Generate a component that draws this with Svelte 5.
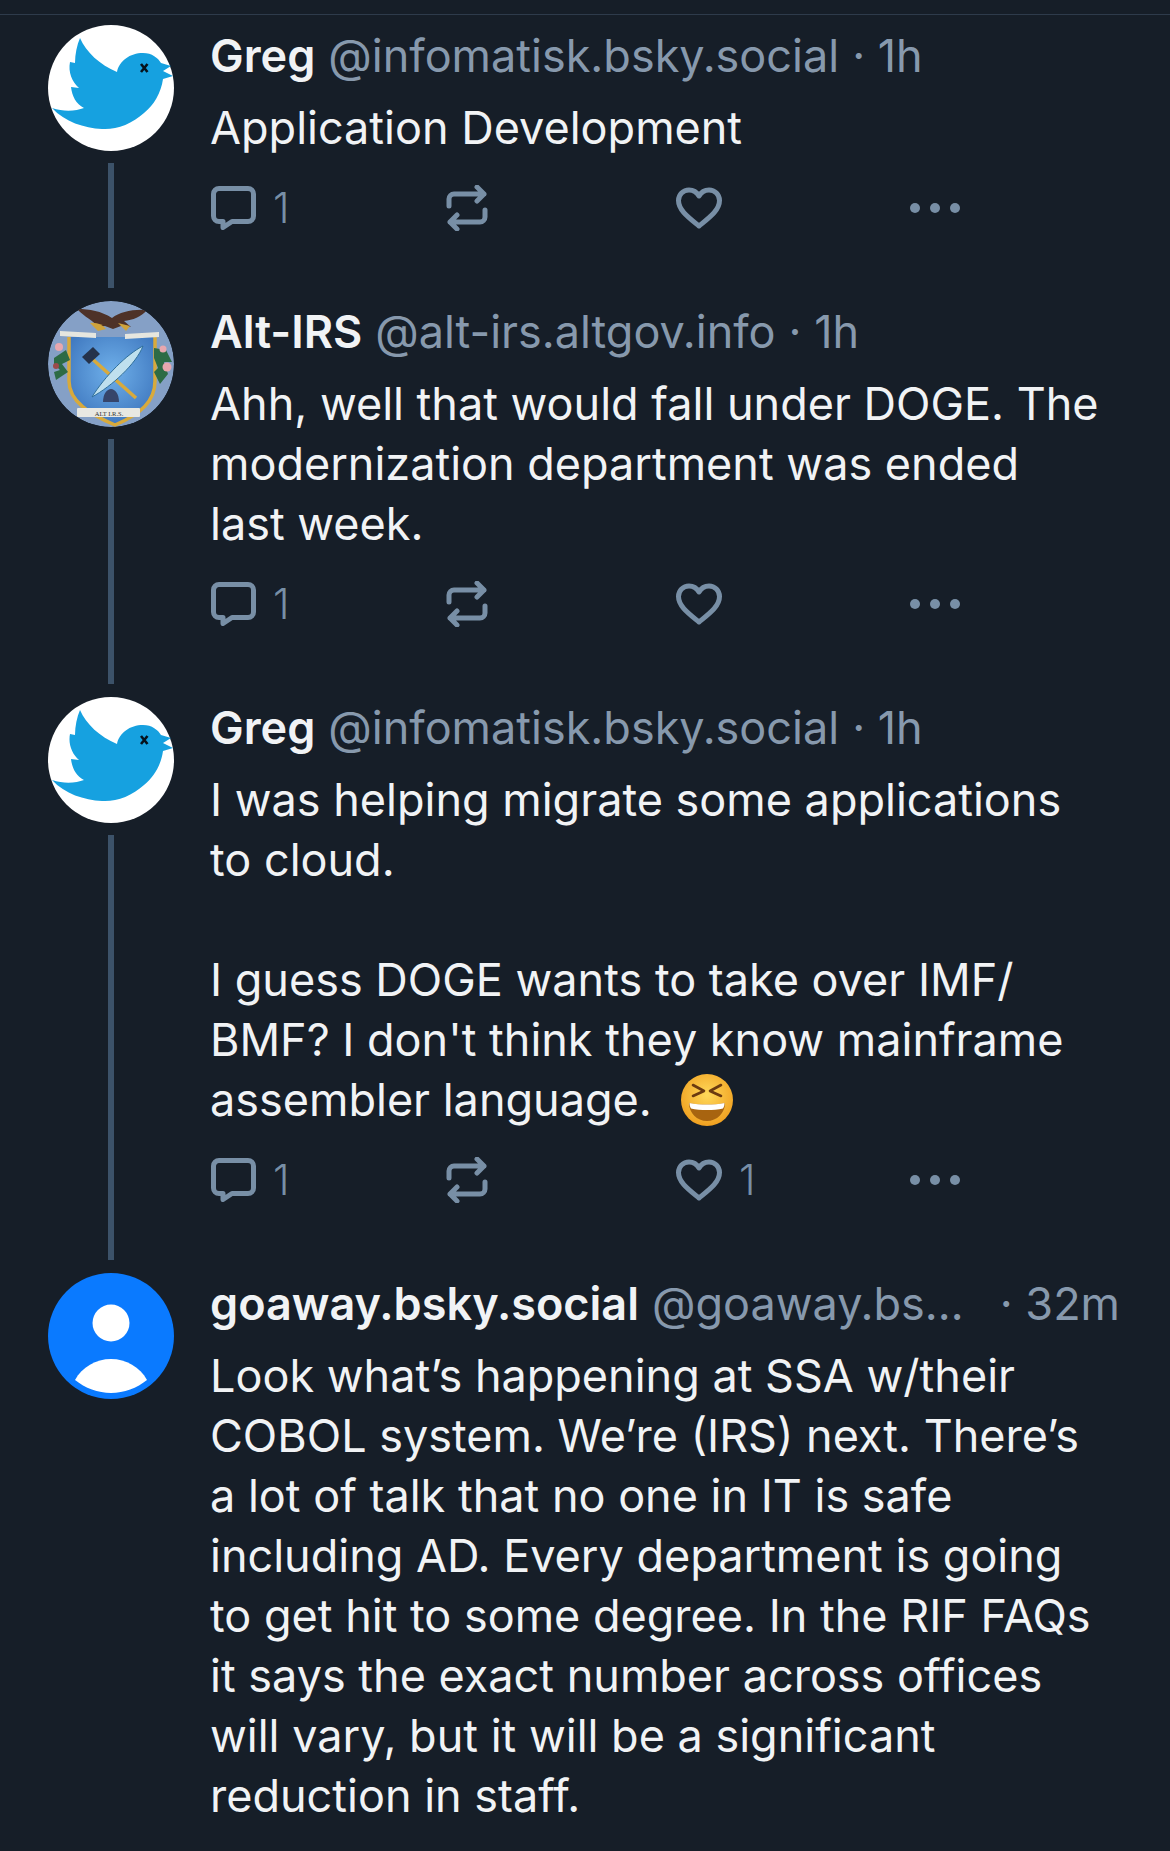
<script>
  const posts = [
    { av: 'bird', name: 'Greg', handle: '@infomatisk.bsky.social', time: '1h', text: 'Application Development', reply: 1, like: 0 },
    { av: 'seal', name: 'Alt-IRS', handle: '@alt-irs.altgov.info', time: '1h', text: 'Ahh, well that would fall under DOGE. The modernization department was ended last week.', reply: 1, like: 0 },
    { av: 'bird', name: 'Greg', handle: '@infomatisk.bsky.social', time: '1h', text: "I was helping migrate some applications to cloud.\n\nI guess DOGE wants to take over IMF/\u200BBMF? I don't think they know mainframe assembler language.", emoji: true, reply: 1, like: 1 },
    { av: 'user', name: 'goaway.bsky.social', handle: '@goaway.bsky.social', time: '32m', text: 'Look what’s happening at SSA w/their COBOL system. We’re (IRS) next. There’s a lot of talk that no one in IT is safe including AD. Every department is going to get hit to some degree. In the RIF FAQs it says the exact number across offices will vary, but it will be a significant reduction in staff.', last: true }
  ];
</script>

<main class="feed">
  {#each posts as p, i}
    <article class="post">
      <div class="side">
        {#if p.av === 'bird'}
          <svg class="avatar" viewBox="0 0 126 126">
            <circle cx="63" cy="63" r="63" fill="#fff" />
            <path fill="#16a1e0" d="M32 13C38 27 52 40 69 47C71 36 82 28 95 28C104 28 110 33 113 38L123 41L115 46L125 51L115 54C113 68 106 80 96 88C84 99 68 105 54 104C36 103 17 97 4 83C16 87 28 86 36 83C28 79 24 71 23 62L31 63C24 57 20 47 22 37L27 38C27 29 29 20 32 13Z" />
            <path d="M93 39l6.500 8M99.500 39l-6.500 8" stroke="#06121c" stroke-width="2.600" fill="none" />
          </svg>
        {:else if p.av === 'seal'}
          <svg class="avatar" viewBox="18 11 126 126">
            <defs>
              <clipPath id="sealClip"><circle cx="81" cy="74" r="63" /></clipPath>
              <radialGradient id="sealBlue" cx="50%" cy="40%" r="60%"><stop offset="0" stop-color="#6fb0ea" /><stop offset="1" stop-color="#4079c0" /></radialGradient>
            </defs>
            <g clip-path="url(#sealClip)">
              <circle cx="81" cy="74" r="63" fill="#85a0c6" />
              <path d="M39 47h86v44c0 20-14 33-40 44-26-11-46-24-46-44z" fill="url(#sealBlue)" />
              <path d="M39 47v44c0 20 20 33 46 44 26-11 40-24 40-44V47" fill="none" stroke="#d8aa3c" stroke-width="3.500" />
              <path d="M47 19c13 0 24 2 35 9 8-6 20-9 35-8-6 7-14 10-23 11l7 6-10-1-8 3-8-3-8 1c-2-6-13-10-20-18z" fill="#4e3228" />
              <path d="M60 33c6-1 12 1 16 6l-8 2z" fill="#cfa33c" />
              <path d="M88 33l12 3-4 5z" fill="#cfa33c" />
              <path d="M30 41l36 2v5l-36-2zM95 44l34-2v5l-34 2z" fill="#e6e6df" />
              <path d="M60 67l46 41" stroke="#d8aa3c" stroke-width="3.500" />
              <path d="M52 67l11-10 7 7-11 10z" fill="#25324a" />
              <path d="M113 56c-16 8-38 30-51 51 20-11 44-33 51-51z" fill="#bfe0ee" stroke="#2f6f9a" stroke-width="1" />
              <path d="M73 112c0-8 4-13 8-13s8 5 8 13z" fill="#36456b" />
              <rect x="47" y="118" width="63" height="9" rx="1" fill="#e8e8e2" />
              <text x="79" y="125.500" font-family="Liberation Serif, serif" font-size="6.500" fill="#333" text-anchor="middle">ALT I.R.S.</text>
              <path d="M24 68l12-8 4 10-8 4 6 8-12 8-2-8 6-2-6-6zM124 58l12 2 6 12-8 0 4 12-8 10-6-12 4-4-4-10z" fill="#2d6b45" />
              <circle cx="29" cy="57" r="4" fill="#e8a7ae" /><circle cx="133" cy="59" r="3.500" fill="#e8a7ae" /><circle cx="137" cy="77" r="4.500" fill="#e8a7ae" /><circle cx="26" cy="76" r="3" fill="#9c4a4a" />
            </g>
          </svg>
        {:else}
          <svg class="avatar" viewBox="0 0 126 126">
            <circle cx="63" cy="63" r="63" fill="#0a7aff" />
            <circle cx="63" cy="50" r="18.500" fill="#fff" />
            <path d="M27 107c7-13 21-21 36-21s29 8 36 21c-10 8-23 13-36 13s-26-5-36-13z" fill="#fff" />
          </svg>
        {/if}
        {#if !p.last}<div class="thread"></div>{/if}
      </div>
      <div class="content">
        <header class="meta">
          <span class="name">{p.name}</span>
          <span class="handle">{p.handle}</span>
          <span class="time">· {p.time}</span>
        </header>
        <p class="text">{p.text}{#if p.emoji}<svg class="emoji" viewBox="0 0 52 52">
              <defs><radialGradient id="face" cx="50%" cy="40%" r="60%"><stop offset="0" stop-color="#ffd95a" /><stop offset="1" stop-color="#f0a020" /></radialGradient></defs>
              <circle cx="26" cy="26" r="26" fill="url(#face)" />
              <path d="M12 11l11 6-11 5M40 11l-11 6 11 5" fill="none" stroke="#6b3a10" stroke-width="2.600" stroke-linecap="round" stroke-linejoin="round" />
              <path d="M8 29c11 2 25 2 36 0 0 10-8 18-18 18S8 39 8 29z" fill="#a86410" />
              <path d="M8.500 29c11 2 24 2 35 0 0 2-.5 4-1.500 5.500-9 2-23 2-32 0-1-1.500-1.500-3.500-1.500-5.500z" fill="#fff" />
            </svg>{/if}</p>
        {#if !p.last}
          <div class="actions">
            <div class="action">
              <svg class="icon" viewBox="0 0 45 44"><path d="M8 2.500h29a5.500 5.500 0 015.500 5.500v22a5.500 5.500 0 01-5.500 5.500H21l-9 6v-6H8A5.500 5.500 0 012.500 30V8A5.500 5.500 0 018 2.500z" /></svg>
              <span>{p.reply}</span>
            </div>
            <div class="action">
              <svg class="icon repost" viewBox="0 0 42 46"><path d="M3 21v-7a5 5 0 015-5h30M31 2l7 7-7 7M39 25v7a5 5 0 01-5 5H4M11 30l-7 7 7 7" /></svg>
            </div>
            <div class="action">
              <svg class="icon heart" viewBox="0 0 46 42"><path d="M23 39C12 30 2.500 23 2.500 13.500A10.500 10.500 0 0113 3c4.500 0 8 2.500 10 6 2-3.500 5.500-6 10-6a10.500 10.500 0 0110.500 10.500C43.500 23 34 30 23 39z" /></svg>
              {#if p.like}<span>{p.like}</span>{/if}
            </div>
            <div class="dots"><i></i><i></i><i></i></div>
          </div>
        {/if}
      </div>
    </article>
  {/each}
</main>

<style>
  :global(body) {
    margin: 0;
    background: #161e28;
  }
  .feed {
    margin-top: 14px;
    border-top: 1px solid #2e3b4b;
    font-family: Inter, "Noto Sans", sans-serif;
    font-size: 45px;
    line-height: 60px;
    color: #f1f3f5;
  }
  .post {
    display: flex;
    padding: 10px 50px 0 48px;
  }
  .side {
    flex: 0 0 126px;
    display: flex;
    flex-direction: column;
    align-items: center;
    margin-right: 36px;
  }
  .avatar {
    display: block;
    width: 126px;
    height: 126px;
    flex: none;
  }
  .thread {
    flex: 1;
    width: 6px;
    margin: 12px 0 3px;
    background: #3c5269;
  }
  .content {
    flex: 1;
    min-width: 0;
    padding-bottom: 60px;
  }
  .post:last-child .content {
    padding-bottom: 20px;
  }
  .meta {
    display: flex;
    gap: 13px;
    white-space: nowrap;
    margin-top: 1px;
  }
  .name {
    font-weight: 600;
    flex: none;
  }
  .handle {
    color: #8799ad;
    min-width: 0;
    overflow: hidden;
    text-overflow: ellipsis;
  }
  .time {
    color: #8799ad;
    flex: none;
  }
  .text {
    margin: 12px 0 0;
    padding-right: 17px;
    white-space: pre-line;
    font-weight: 400;
  }
  .emoji {
    display: inline-block;
    width: 52px;
    height: 52px;
    margin-left: 29px;
    vertical-align: -10px;
  }
  .actions {
    display: grid;
    grid-template-columns: repeat(3, 233px) auto;
    margin: 27px 0 0 1px;
    height: 46px;
    align-items: center;
    color: #788fa6;
  }
  .action {
    display: flex;
    align-items: center;
    gap: 17px;
    line-height: 46px;
    font-size: 42px;
    font-weight: 300;
  }
  .icon {
    width: 45px;
    height: 44px;
    flex: none;
    fill: none;
    stroke: #788fa6;
    stroke-width: 5;
    stroke-linecap: round;
    stroke-linejoin: round;
  }
  .repost {
    width: 42px;
    height: 46px;
    margin-left: 2px;
  }
  .heart {
    width: 46px;
    height: 42px;
    margin-left: -1px;
  }
  .dots {
    display: flex;
    gap: 10px;
  }
  .dots i {
    display: block;
    width: 10px;
    height: 10px;
    border-radius: 50%;
    background: #788fa6;
  }
</style>
